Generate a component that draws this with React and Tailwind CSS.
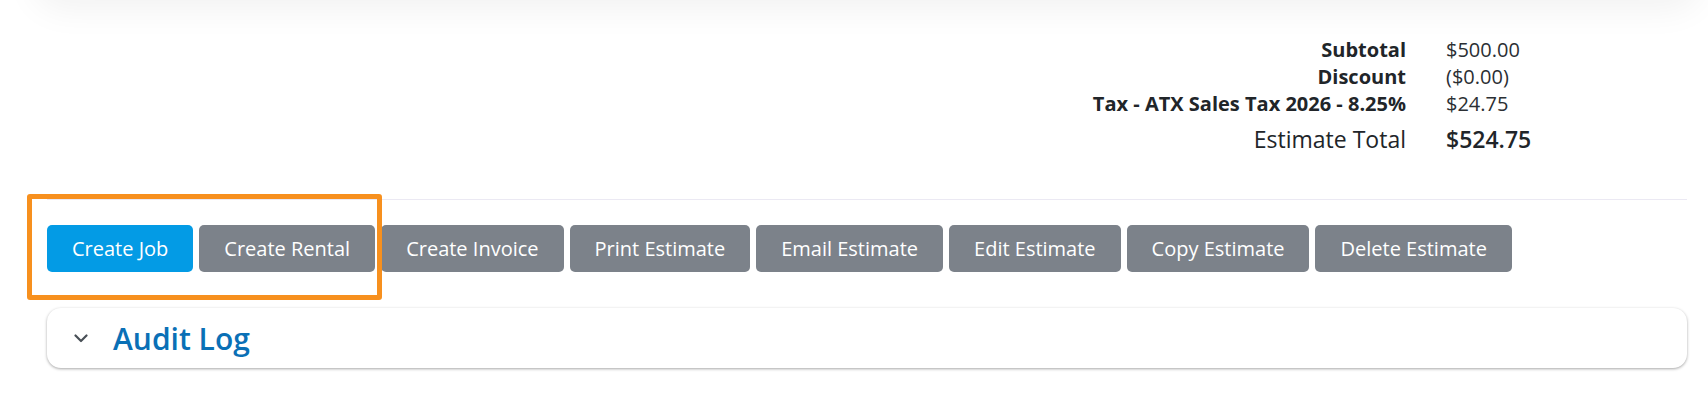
import React from "react";

const totals = [
  { label: "Subtotal", value: "$500.00" },
  { label: "Discount", value: "($0.00)" },
  { label: "Tax - ATX Sales Tax 2026 - 8.25%", value: "$24.75" },
];

const actions = [
  { label: "Create Job", primary: true },
  { label: "Create Rental" },
  { label: "Create Invoice" },
  { label: "Print Estimate" },
  { label: "Email Estimate" },
  { label: "Edit Estimate" },
  { label: "Copy Estimate" },
  { label: "Delete Estimate" },
];

export default function App() {
  return (
    <div
      className="h-[407px] w-full overflow-hidden bg-white pl-[47px] pr-[21px]"
      style={{ fontFamily: '"Open Sans", "Liberation Sans", sans-serif' }}
    >
      {/* bottom edge of the card above */}
      <div className="-mt-[44px] h-[40px] rounded-2xl bg-white shadow-[0_0_34px_14px_rgba(0,0,0,0.055)]" />

      {/* Totals */}
      <div className="mt-[40px] flex justify-end">
        <div className="grid grid-cols-[auto_241px] gap-x-[40px] text-[20px] leading-[27px] text-[#212529]">
          {totals.map((row) => (
            <React.Fragment key={row.label}>
              <div className="text-right font-bold">{row.label}</div>
              <div className="text-[#2b2f33]">{row.value}</div>
            </React.Fragment>
          ))}
          <div className="mt-[5px] text-right text-[23px] font-medium leading-[34px]">Estimate Total</div>
          <div className="mt-[5px] text-[23px] font-semibold leading-[34px]">$524.75</div>
        </div>
      </div>

      {/* Actions */}
      <div className="mt-[43px] border-t border-[#ebe9f3] pt-[25px]">
        <div className="relative flex gap-[6px]">
          {actions.map((a) => (
            <button
              key={a.label}
              className={`h-[47px] rounded-[5px] px-[25px] text-[20px] text-white ${
                a.primary ? "bg-[#039be5]" : "bg-[#7c828a]"
              }`}
            >
              {a.label}
            </button>
          ))}
          <div className="pointer-events-none absolute -left-[20px] -top-[31px] h-[106px] w-[355px] rounded-[3px] border-[5px] border-[#f7901e]" />
        </div>
      </div>

      {/* Audit Log */}
      <div className="mt-[36px] flex h-[60px] items-center rounded-[14px] bg-white pl-[27px] shadow-[0_1px_3px_rgba(0,0,0,0.35)]">
        <svg width="14" height="9" viewBox="0 0 14 9" fill="none" className="shrink-0">
          <path d="M1.5 1.5L7 7L12.5 1.5" stroke="#495057" strokeWidth="2.2" strokeLinecap="round" strokeLinejoin="round" />
        </svg>
        <h2 className="ml-[25px] text-[30px] font-semibold text-[#0a70b6]">Audit Log</h2>
      </div>
    </div>
  );
}
